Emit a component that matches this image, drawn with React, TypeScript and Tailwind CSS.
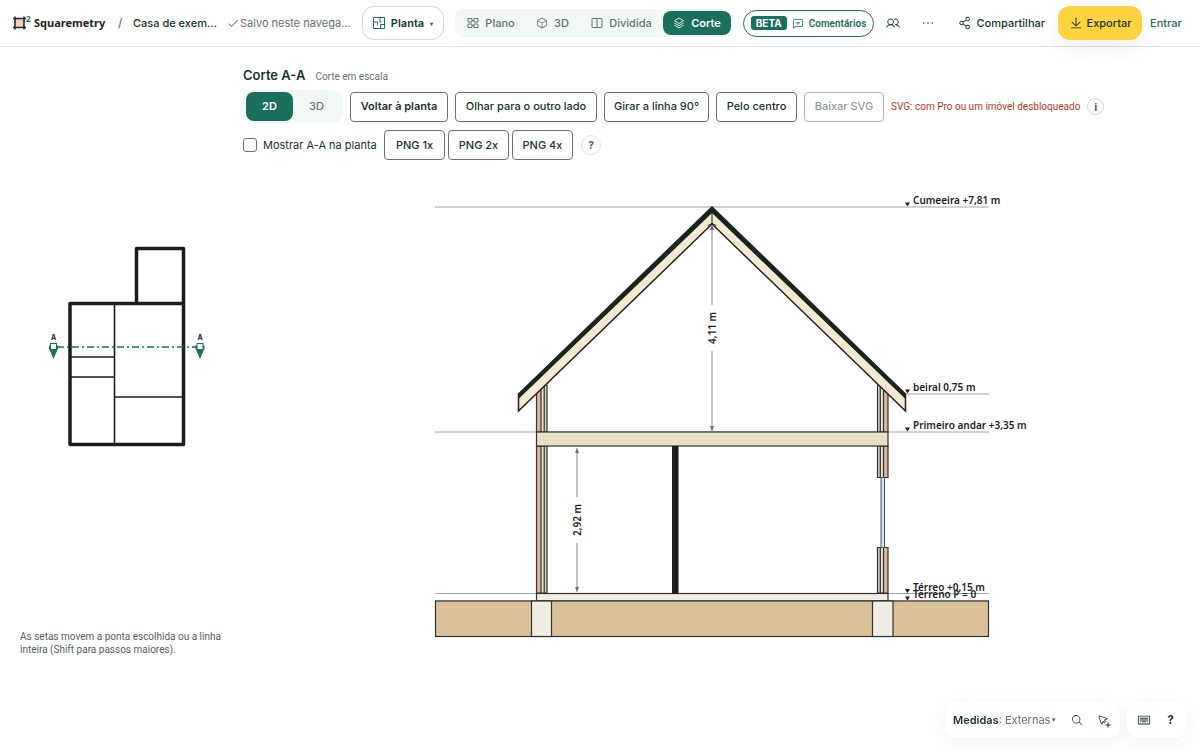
import React, { useState } from "react";
import clsx from "clsx";
import {
  PiArrowLineDown,
  PiChatText,
  PiCheck,
  PiCube,
  PiCursor,
  PiDotsThree,
  PiKeyboard,
  PiMagnifyingGlass,
  PiShareNetwork,
  PiStack,
  PiUsers,
} from "react-icons/pi";

const Logo: React.FC = () => (
  <svg className="h-4 w-5 shrink-0 overflow-visible" viewBox="0 0 20 16" aria-hidden="true">
    <rect x="3" y="3.5" width="9" height="9" fill="#f6cdb8" />
    <path
      d="M3 1.5v13M12 1.5v13M1 3.5h13M1 12.5h13"
      stroke="#26231f"
      strokeWidth="1.6"
      fill="none"
    />
    <text x="14" y="7" fontSize="8" fontWeight="700" fill="#1b6f5f">
      2
    </text>
  </svg>
);

const PlanIcon: React.FC = () => (
  <svg
    className="h-3 w-3 shrink-0 text-[#1b6f5f]"
    viewBox="0 0 12 12"
    fill="none"
    stroke="currentColor"
    aria-hidden="true"
  >
    <path d="M.5.5h11v11H.5zM7 .5v4.500M7 5h1.500M.5 5h4v2.500M7.500 11.500v-4h4M4.500 7.500v1" />
  </svg>
);

const GridIcon: React.FC = () => (
  <svg
    className="h-3 w-3 shrink-0"
    viewBox="0 0 12 12"
    fill="none"
    stroke="currentColor"
    aria-hidden="true"
  >
    <path d="M1 1.5h4v3.5H1zM7 1.5h4v3.5H7zM1 7h4v3.5H1zM7 7h4v3.5H7zM5 3.5h2M5 8.5h2" />
  </svg>
);

const SplitIcon: React.FC = () => (
  <svg
    className="h-3 w-3 shrink-0"
    viewBox="0 0 12 12"
    fill="none"
    stroke="currentColor"
    aria-hidden="true"
  >
    <rect x="1" y="1.5" width="10" height="9" rx="0.5" />
    <path d="M6 1.5v9" />
  </svg>
);

const CursorPlusIcon: React.FC = () => (
  <span className="relative block h-3 w-3">
    <PiCursor className="h-3 w-3" />
    <svg
      className="absolute -right-0.5 -bottom-0.5 h-1.5 w-1.5 bg-white"
      viewBox="0 0 6 6"
      stroke="currentColor"
      aria-hidden="true"
    >
      <path d="M3 .5v5M.5 3h5" />
    </svg>
  </span>
);

const views = [
  { id: "plano", label: "Plano", icon: <GridIcon />, width: "w-[68px]" },
  { id: "3d", label: "3D", icon: <PiCube className="h-3 w-3" />, width: "w-[55px]" },
  { id: "dividida", label: "Dividida", icon: <SplitIcon />, width: "w-[83px]" },
  { id: "corte", label: "Corte", icon: <PiStack className="h-3 w-3" />, width: "w-[68px]" },
];

const Header: React.FC = () => {
  const [view, setView] = useState("corte");

  return (
    <header className="flex h-[47px] items-center border-b border-[#dfe6e3] pr-[18px] pl-3 whitespace-nowrap">
      <a
        href="#"
        className="flex w-24 shrink-0 items-center gap-0.5 font-['Noto_Sans',sans-serif] text-[11px] font-bold text-[#26231f]"
      >
        <Logo />
        Squaremetry
      </a>
      <span className="ml-2.5 w-[15px] shrink-0 text-[12px] text-[#55615d]">/</span>
      <span className="w-[86px] shrink-0 truncate text-[11px] font-medium">Casa de exemplo</span>
      <span className="ml-2 flex w-[127px] shrink-0 items-center gap-px text-[11px] text-[#66736e]">
        <PiCheck className="h-3 w-3 shrink-0" />
        <span className="truncate">Salvo neste navegador</span>
      </span>
      <button className="ml-2 flex h-[34px] w-[82px] shrink-0 items-center justify-center gap-1.5 rounded-xl border border-[#ccd8d4] text-[11px] font-semibold">
        <PlanIcon />
        Planta
        <span className="text-[6px] text-[#55615d]">▾</span>
      </button>

      <div className="ml-[11px] flex h-7 shrink-0 items-center rounded-lg bg-[#f1f8f6] px-0.5">
        {views.map((v) => (
          <button
            key={v.id}
            onClick={() => setView(v.id)}
            className={clsx(
              "flex h-6 items-center justify-center gap-1.5 rounded-lg text-[11px]",
              v.width,
              v.id === view
                ? "bg-[#1b6f5f] font-semibold text-white"
                : "font-medium text-[#66736e]"
            )}
          >
            {v.icon}
            {v.label}
          </button>
        ))}
      </div>

      <button className="ml-2.5 flex h-[27px] w-[131px] shrink-0 items-center justify-center gap-[5px] rounded-full border border-[#1b6f5f] text-[10px] text-[#1b6f5f]">
        <span className="flex h-3.5 w-9 items-center justify-center rounded-[3px] bg-[#1b6f5f] font-bold text-white">
          BETA
        </span>
        <PiChatText className="h-3 w-3 shrink-0" />
        <span className="font-['Roboto',sans-serif] font-semibold">Comentários</span>
      </button>
      <button aria-label="Pessoas" className="ml-3 shrink-0">
        <PiUsers className="h-3.5 w-3.5" />
      </button>
      <button aria-label="Mais opções" className="ml-5 shrink-0">
        <PiDotsThree className="h-4 w-4" />
      </button>

      <div className="ml-auto flex shrink-0 items-center">
        <button className="flex w-[87px] items-center justify-between text-[11px] font-medium">
          <PiShareNetwork className="h-3.5 w-3.5 shrink-0" />
          Compartilhar
        </button>
        <button className="ml-[13px] flex h-[34px] w-[84px] items-center justify-center gap-1 rounded-xl bg-[#ffd23f] text-[11px] font-medium shadow-[0_8px_20px_rgba(20,50,40,0.08)]">
          <PiArrowLineDown className="h-3.5 w-3.5" />
          Exportar
        </button>
        <a href="#" className="ml-2 w-8 text-[11px] font-medium text-[#1b6f5f]">
          Entrar
        </a>
      </div>
    </header>
  );
};

const FloorPlan: React.FC = () => (
  <svg className="w-full" viewBox="0 230 240 230" role="img" aria-label="Planta com linha de corte A-A">
    <g fill="none" stroke="#1d1d1b">
      <path d="M114.5 304v140M70 357h44.5M70 377h44.5M114.5 397h69" strokeWidth="1.6" />
      <path
        d="M70 303.5h113.5v141H70zM136.5 303.5v-55h47v55"
        strokeWidth="3.5"
        strokeLinejoin="round"
      />
    </g>
    <path d="M57 347h139" stroke="#1b6f5f" strokeWidth="1.3" strokeDasharray="7 3 2 3" />
    {[53.5, 200].map((x) => (
      <g key={x} transform={`translate(${x} 346.5)`}>
        <path d="M-4.5 -1h9v3L0 12.5 -4.5 2z" fill="#1b6f5f" />
        <rect x="-3" y="-3" width="6" height="6" fill="#fff" stroke="#1b6f5f" />
        <text y="-7" fontSize="7" fontWeight="700" textAnchor="middle" fill="#1d1d1b">
          A
        </text>
      </g>
    ))}
  </svg>
);

const levels = [
  { label: "Cumeeira +7,81 m", y: 207, from: 435 },
  { label: "beiral 0,75 m", y: 394, from: 880 },
  { label: "Primeiro andar +3,35 m", y: 432, from: 435 },
  { label: "Térreo +0,15 m", y: 593.5, from: 435 },
  { label: "Terreno P = 0", y: 601, from: 435 },
];

const dimensions = [
  { label: "4,11 m", x: 712, top: 225, bottom: 431, mid: 328 },
  { label: "2,92 m", x: 577, top: 448, bottom: 592, mid: 520 },
];

// Brick, insulation and lining, ordered from the outside inwards
const WallLayers: React.FC<{ x: number; top: number; bottom: number; mirrored?: boolean }> = ({
  x,
  top,
  bottom,
  mirrored,
}) => {
  const h = bottom - top;
  return (
    <g transform={`translate(${x} ${top}) scale(${mirrored ? -1 : 1} 1)`}>
      <rect width="10.5" height={h} fill="#e9e2cb" />
      <rect width="4.5" height={h} fill="#e0b3a0" />
      <rect x="8" width="2.5" height={h} fill="#cfd3d1" />
      <path d={`M4.5 0v${h}M7.7 0v${h}`} stroke="#33332b" strokeWidth="1.2" />
      <path d={`M0 0h10.5v${h}H0z`} fill="none" stroke="#33332b" strokeWidth="1.2" />
    </g>
  );
};

const SectionDrawing: React.FC = () => (
  <svg
    className="w-full font-['Noto_Sans',sans-serif]"
    viewBox="243 170 957 480"
    role="img"
    aria-label="Corte A-A da casa"
  >
    {levels.map((l) => (
      <path key={l.label} d={`M${l.from} ${l.y}H989`} stroke="#8b908e" strokeWidth="0.8" />
    ))}

    <WallLayers x={536.5} top={385} bottom={432} />
    <WallLayers x={536.5} top={446} bottom={593} />
    <WallLayers x={888} top={385} bottom={432} mirrored />
    <WallLayers x={888} top={446} bottom={477.5} mirrored />
    <WallLayers x={888} top={547.5} bottom={593} mirrored />
    <rect x="881" y="477.5" width="3.5" height="70" fill="#d3e2f0" stroke="#4b5257" />

    <path
      d="M712 207 518.5 394v17L712 224l193.5 187v-17z"
      fill="#f5e9d0"
      stroke="#26231f"
      strokeWidth="1.5"
    />
    <path d="M712 207 518.5 394v5L712 213l193.5 186v-5z" fill="#17251f" />
    <path d="M712 212v13M708 225.500l4 -2 4 2" fill="none" stroke="#26231f" />

    <g stroke="#33332b" strokeWidth="1.2">
      <rect x="536.5" y="432" width="351.5" height="14" fill="#e9e0c6" />
      <rect x="536.5" y="593.5" width="351.5" height="7.5" fill="#f0ede4" />
      <rect x="435.5" y="601" width="553" height="35.5" fill="#d9c19a" />
      <rect x="531.5" y="601" width="20" height="35.5" fill="#f0ede4" />
      <rect x="872.5" y="601" width="20.5" height="35.5" fill="#f0ede4" />
    </g>
    <rect x="672" y="446" width="6.5" height="147.5" fill="#1d1d1b" />

    {dimensions.map((d) => (
      <g key={d.label}>
        <path
          d={`M${d.x} ${d.top}V${d.mid - 23}M${d.x} ${d.mid + 23}V${d.bottom}`}
          stroke="#858a88"
        />
        <path
          d={`M${d.x} ${d.top}l-2 5h4zM${d.x} ${d.bottom}l-2 -5h4z`}
          fill="#6b706e"
        />
        <text
          transform={`translate(${d.x + 4} ${d.mid}) rotate(-90)`}
          textAnchor="middle"
          fontSize="10"
          fontWeight="600"
          fill="#1d1d1b"
        >
          {d.label}
        </text>
      </g>
    ))}

    {levels.map((l) => (
      <g key={l.label} fill="#1d1d1b">
        <path d={`M907.5 ${l.y - 0.5}l-2.5 -4h5z`} />
        <text x="913" y={l.y - 3} fontSize="10" fontWeight="600">
          {l.label}
        </text>
      </g>
    ))}
  </svg>
);

const actions = [
  { label: "Voltar à planta", style: "w-[98px] font-semibold" },
  { label: "Olhar para o outro lado", style: "w-[142px] font-medium" },
  { label: "Girar a linha 90°", style: "w-[105px] font-medium" },
  { label: "Pelo centro", style: "w-[81px] font-medium" },
  { label: "Baixar SVG", style: "w-20 font-medium", disabled: true },
];

const Toolbar: React.FC = () => {
  const [mode, setMode] = useState("2D");

  return (
    <div className="whitespace-nowrap">
      <div className="flex items-baseline gap-2.5">
        <h1 className="text-[13px] leading-5 font-semibold">Corte A-A</h1>
        <span className="font-['Roboto',sans-serif] text-[10px] leading-4 text-[#66736e]">
          Corte em escala
        </span>
      </div>

      <div className="mt-[5px] flex flex-wrap items-center gap-[7px]">
        <div className="flex h-[33px] w-[100px] items-center rounded-[10px] bg-[#f1f8f6] px-[3px]">
          {["2D", "3D"].map((m) => (
            <button
              key={m}
              onClick={() => setMode(m)}
              className={clsx(
                "h-[29px] flex-1 rounded-lg text-[11px]",
                m === mode
                  ? "bg-[#1b6f5f] font-semibold text-white"
                  : "font-medium text-[#66736e]"
              )}
            >
              {m}
            </button>
          ))}
        </div>
        {actions.map((a) => (
          <button
            key={a.label}
            disabled={a.disabled}
            className={clsx(
              "h-[30px] rounded border border-[#6b7471] bg-white text-[11px] disabled:opacity-50",
              a.style
            )}
          >
            {a.label}
          </button>
        ))}
        <span className="font-['Roboto',sans-serif] text-[10px] leading-4 text-[#b23a1c]">
          SVG: com Pro ou um imóvel desbloqueado
        </span>
        <button
          aria-label="Informações"
          className="h-[17px] w-[17px] rounded-full border border-[#ccd8d4] text-[10px] leading-none font-semibold"
        >
          i
        </button>
      </div>

      <div className="mt-[7px] flex items-center">
        <label className="flex w-[141px] items-center gap-1.5 text-[11px]">
          <input
            type="checkbox"
            className="h-3.5 w-3.5 shrink-0 appearance-none rounded-[3px] border border-[#6b7471] bg-white checked:bg-[#1b6f5f]"
          />
          Mostrar A-A na planta
        </label>
        <div className="flex gap-[3px]">
          {["PNG 1x", "PNG 2x", "PNG 4x"].map((label) => (
            <button
              key={label}
              className="h-[30px] w-[61px] rounded border border-[#6b7471] bg-white text-[11px] font-medium"
            >
              {label}
            </button>
          ))}
        </div>
        <button
          aria-label="Ajuda do corte"
          className="ml-2 h-5 w-5 rounded-full border border-[#dfe6e3] text-[10px] leading-none font-bold text-[#1b6f5f]"
        >
          ?
        </button>
      </div>
    </div>
  );
};

const BottomBar: React.FC = () => (
  <div className="fixed right-3.5 bottom-3 flex gap-[7px] text-[11px]">
    <div className="flex h-9 w-[175px] items-center rounded-xl bg-white pl-2 shadow-[0_4px_20px_rgba(20,50,40,0.07)]">
      <button className="flex w-[106px] items-center whitespace-nowrap">
        <span className="font-semibold">Medidas</span>
        <span className="text-[#66736e]">:&nbsp;Externas</span>
        <span className="ml-0.5 text-[7px] text-[#55615d]">▾</span>
      </button>
      <button aria-label="Buscar" className="ml-3">
        <PiMagnifyingGlass className="h-3 w-3" />
      </button>
      <button aria-label="Seleção múltipla" className="ml-3.5">
        <CursorPlusIcon />
      </button>
    </div>
    <div className="flex h-9 w-[59px] items-center justify-between rounded-xl bg-white pr-3 pl-2.5 shadow-[0_4px_20px_rgba(20,50,40,0.07)]">
      <button aria-label="Atalhos de teclado">
        <PiKeyboard className="h-3.5 w-3.5" />
      </button>
      <button aria-label="Ajuda" className="text-[12px] font-bold">
        ?
      </button>
    </div>
  </div>
);

const App: React.FC = () => (
  <div className="flex min-h-screen flex-col bg-white font-['Inter',sans-serif] text-[#17352c]">
    <Header />
    <div className="flex flex-1">
      <aside className="w-[20%] shrink-0 pt-[183px]">
        <FloorPlan />
        <p className="mt-[170px] pr-3 pl-5 font-['Roboto',sans-serif] text-[10px] leading-[13px] text-[#55615d]">
          As setas movem a ponta escolhida ou a linha inteira (Shift para passos maiores).
        </p>
      </aside>
      <main className="min-w-0 flex-1 pt-[18px] pl-[3px]">
        <Toolbar />
        <div className="mt-2.5">
          <SectionDrawing />
        </div>
      </main>
    </div>
    <BottomBar />
  </div>
);

export default App;
